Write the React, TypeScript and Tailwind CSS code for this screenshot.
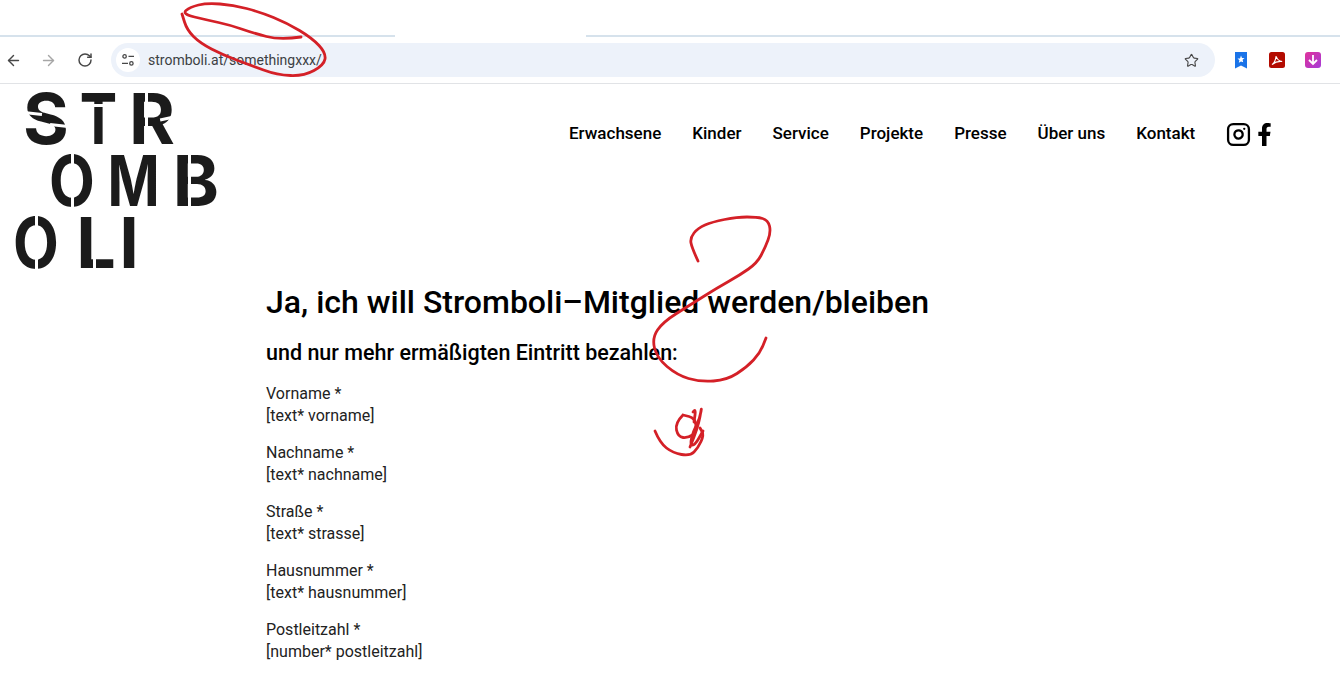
import { ArrowLeft, ArrowRight, RotateCw, Star, Instagram } from "lucide-react";
import { FaFacebookF } from "react-icons/fa";

const navItems = ["Erwachsene", "Kinder", "Service", "Projekte", "Presse", "Über uns", "Kontakt"];

const fields = [
  ["Vorname", "[text* vorname]"],
  ["Nachname", "[text* nachname]"],
  ["Straße", "[text* strasse]"],
  ["Hausnummer", "[text* hausnummer]"],
  ["Postleitzahl", "[number* postleitzahl]"],
];

function BrowserBar() {
  return (
    <div className="h-[84px] border-b border-[#e1e3e6] bg-white">
      <div className="flex h-[37px] items-end">
        <div className="h-[2px] w-[395px] bg-[#d6e2ec]" />
        <div className="h-[2px] w-[191px] bg-white" />
        <div className="h-[2px] flex-1 bg-[#d6e2ec]" />
      </div>
      <div className="mt-[6px] flex h-[34px] items-center">
        <ArrowLeft className="ml-[5px] h-[17px] w-[17px] text-[#474747]" strokeWidth={2} />
        <ArrowRight className="ml-[18px] h-[17px] w-[17px] text-[#a6a6a6]" strokeWidth={2} />
        <RotateCw className="ml-[20px] h-[16px] w-[16px] text-[#474747]" strokeWidth={2.2} />
        <div className="ml-[18px] flex h-[34px] w-[1104px] items-center rounded-full bg-[#edf2fa] pl-[5px] pr-[16px]">
          <div className="flex h-[24px] w-[24px] items-center justify-center rounded-full bg-white">
            <svg width="14" height="14" viewBox="0 0 14 14" fill="none" stroke="#474747" strokeWidth="1.3">
              <circle cx="3.6" cy="3.4" r="1.7" />
              <path d="M7.500 3.400H13M1 10.400h6" />
              <circle cx="10.400" cy="10.400" r="1.700" />
            </svg>
          </div>
          <span className="ml-[8px] pt-[1px] font-['Roboto',sans-serif] text-[14px] text-[#3c4043]">stromboli.at/somethingxxx/</span>
          <Star className="ml-auto h-[15px] w-[15px] text-[#474747]" strokeWidth={1.8} />
        </div>
        <svg className="ml-[20px]" width="12" height="17" viewBox="0 0 12 17">
          <path d="M0 0h12v16.500l-6-3-6 3z" fill="#1a73e8" />
          <path d="M6 3.500l1 2.400 2.500.2-1.900 1.600.6 2.500L6 9.400l-2.200 1.300.6-2.500-1.900-1.600 2.500-.2z" fill="#fff" />
        </svg>
        <svg className="ml-[22px]" width="16" height="16" viewBox="0 0 16 16">
          <rect width="16" height="16" rx="2.500" fill="#b30b00" />
          <path d="M3 12.500c2-1 3.500-4 4.200-8.500.6 3 2.500 5 6 5.500-3.500-.5-7 .5-10.200 3z" fill="none" stroke="#fff" strokeWidth="1.200" />
        </svg>
        <svg className="ml-[20px]" width="16" height="16" viewBox="0 0 16 16">
          <defs>
            <linearGradient id="dl" x1="0" y1="0" x2="1" y2="1">
              <stop offset="0" stopColor="#e0329a" />
              <stop offset="1" stopColor="#a63bd8" />
            </linearGradient>
          </defs>
          <rect width="16" height="16" rx="3" fill="url(#dl)" />
          <path d="M8 3v9M4 8l4 4 4-4" fill="none" stroke="#fff" strokeWidth="1.800" />
        </svg>
      </div>
    </div>
  );
}

// stencil cuts are white slits laid over real text
function Slit({ className }: { className: string }) {
  return <span className={`absolute bg-white ${className}`} />;
}

function Logo() {
  const letter = "relative inline-flex h-[60px] items-center justify-center";
  return (
    <div className="h-[186px] w-[240px] select-none font-['Inter',sans-serif] text-[70px] font-bold leading-[60px] text-[#1b1b1b]">
      <div className="ml-[24px] mt-[5px] flex">
        <span className={`${letter} w-[44px]`}>
          S
          <Slit className="left-0 top-[23px] h-[3px] w-[18px] rotate-6" />
          <Slit className="right-0 top-[35px] h-[3px] w-[18px] rotate-6" />
        </span>
        <span className={`${letter} ml-[12px] w-[36px]`}>
          <span className="inline-block scale-x-[0.8]">T</span>
          <Slit className="left-[10px] top-[15px] h-[3px] w-[16px]" />
        </span>
        <span className={`${letter} ml-[14px] w-[44px]`}>
          R
          <Slit className="left-[15px] top-0 h-[60px] w-[3px]" />
          <Slit className="right-0 top-[28px] h-[3px] w-[14px] -rotate-12" />
        </span>
      </div>
      <div className="ml-[50px] mt-[2px] flex">
        <span className={`${letter} w-[44px]`}>
          <span className="inline-block scale-x-[0.85]">O</span>
          <Slit className="left-[21px] top-0 h-[60px] w-[3px]" />
        </span>
        <span className={`${letter} ml-[17px] w-[46px]`}>
          <span className="inline-block scale-x-[0.8]">M</span>
        </span>
        <span className={`${letter} ml-[17px] w-[44px]`}>
          B
          <Slit className="left-[14px] top-0 h-[60px] w-[3px]" />
        </span>
      </div>
      <div className="ml-[14px] mt-[2px] flex">
        <span className={`${letter} w-[44px]`}>
          <span className="inline-block scale-x-[0.85]">O</span>
          <Slit className="left-[21px] top-0 h-[60px] w-[3px]" />
        </span>
        <span className={`${letter} ml-[20px] w-[36px]`}>
          L
          <Slit className="left-[15px] top-[40px] h-[20px] w-[3px]" />
        </span>
        <span className={`${letter} ml-[4px] w-[22px]`}>I</span>
      </div>
    </div>
  );
}

// rounds a hand-drawn stroke through its points
function smooth(points: number[][]) {
  let d = `M${points[0][0]} ${points[0][1]}`;
  for (let i = 1; i < points.length - 1; i++) {
    const [x, y] = points[i];
    const [nx, ny] = points[i + 1];
    d += `Q${x} ${y} ${(x + nx) / 2} ${(y + ny) / 2}`;
  }
  const last = points[points.length - 1];
  return `${d}L${last[0]} ${last[1]}`;
}

const strokes = [
  [[301, 37], [280, 40], [253, 33], [230, 25], [207, 20], [182, 14], [190, 7], [207, 3], [233, 5], [260, 12], [287, 23], [312, 38], [326, 53], [324, 65], [304, 76], [277, 75], [250, 65], [223, 55], [200, 43], [187, 30], [182, 14]],
  [[698, 261], [692, 248], [690, 238], [698, 228], [712, 222], [737, 217], [757, 217], [768, 220], [771, 232], [765, 248], [757, 263], [740, 275], [717, 288], [690, 305], [663, 322], [652, 338], [657, 358], [677, 375], [700, 382], [727, 380], [747, 367], [760, 353], [766, 338]],
  [[655, 431], [660, 443], [673, 453], [690, 456], [698, 448], [704, 435], [700, 428]],
  [[683, 415], [675, 423], [678, 437], [688, 438], [697, 432], [695, 418], [683, 415]],
  [[690, 447], [698, 428], [702, 405], [700, 418], [693, 432], [690, 445], [695, 445], [703, 431]],
  [[693, 412], [696, 408], [694, 422]],
];

function Scribbles() {
  return (
    <svg className="pointer-events-none absolute left-0 top-0" width="1340" height="677" fill="none" stroke="#d42027" strokeWidth="2.800" strokeLinecap="round" strokeLinejoin="round">
      {strokes.map((points, i) => (
        <path key={i} d={smooth(points)} />
      ))}
    </svg>
  );
}

export default function App() {
  return (
    <div className="relative h-[677px] w-full overflow-hidden bg-white text-[#111]">
      <BrowserBar />
      <header className="flex items-start">
        <Logo />
        <nav className="ml-[329px] mt-[35px] flex h-[30px] items-center gap-[31px] font-['Roboto',sans-serif] text-[17px] font-medium text-black">
          {navItems.map((item) => (
            <a key={item}>{item}</a>
          ))}
          <span className="flex items-center gap-[6px]">
            <Instagram className="h-[25px] w-[25px]" strokeWidth={2.2} />
            <FaFacebookF className="h-[23px] w-[15px]" />
          </span>
        </nav>
      </header>
      <main className="ml-[266px] mt-[10px] font-['Roboto',sans-serif]">
        <h1 className="text-[32px] font-medium leading-[44px] text-black">Ja, ich will Stromboli–Mitglied werden/bleiben</h1>
        <h2 className="mt-[15px] text-[21.500px] font-medium leading-[28px] text-black">und nur mehr ermäßigten Eintritt bezahlen:</h2>
        <form className="mt-[16px] flex flex-col gap-[15px] text-[16px] leading-[22px] text-[#222]">
          {fields.map(([label, tag]) => (
            <p key={label}>
              {label} *
              <br />
              {tag}
            </p>
          ))}
        </form>
      </main>
      <Scribbles />
    </div>
  );
}
